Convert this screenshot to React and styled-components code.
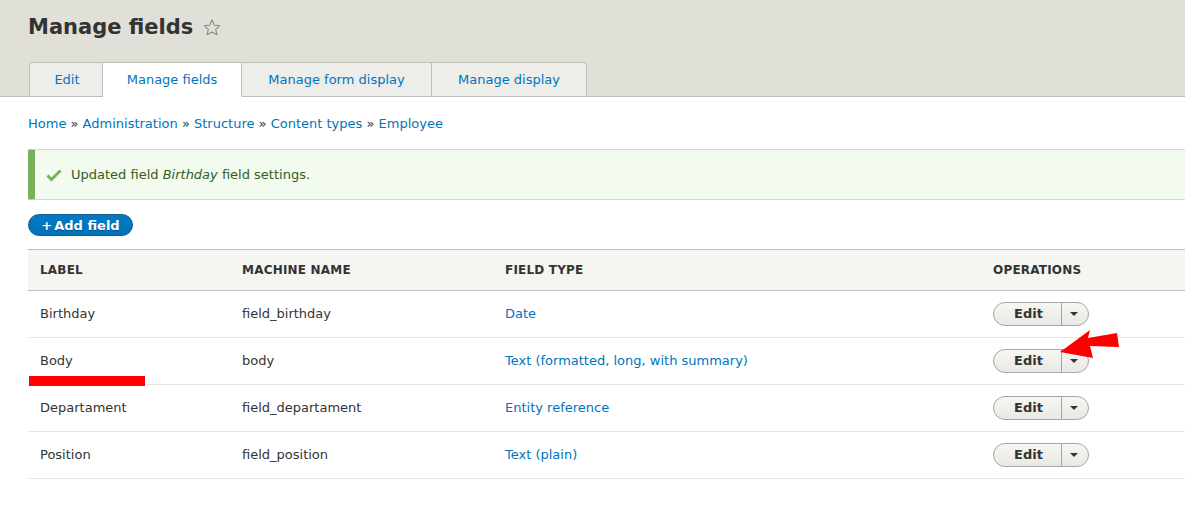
import React from "react";
import styled, { createGlobalStyle } from "styled-components";

const Global = createGlobalStyle`
  html, body { margin: 0; padding: 0; background: #fff; }
  body {
    font-family: "DejaVu Sans", Verdana, sans-serif;
    font-size: 13px;
    color: #333;
    overflow: hidden;
    width: 1185px;
    height: 519px;
  }
  a { color: #0074bd; text-decoration: none; }
`;

const Page = styled.div`
  position: relative;
  width: 1185px;
  height: 519px;
  overflow: hidden;
`;

const Header = styled.header`
  background: #e0e0d8;
  border-bottom: 1px solid #bfbfba;
  padding: 13px 0 0 28px;
  height: 83px;
  box-sizing: content-box;
  display: flex;
  flex-direction: column;
`;

const TitleRow = styled.div`
  display: flex;
  align-items: center;
  gap: 9px;
  height: 28px;
`;

const Title = styled.h1`
  margin: 0;
  font-size: 21px;
  font-weight: bold;
  color: #333;
  line-height: 28px;
`;

const Tabs = styled.nav`
  display: flex;
  margin-top: 21px;
  margin-left: 1px;
  margin-bottom: -1px;
`;

const Tab = styled.a`
  display: flex;
  align-items: center;
  justify-content: center;
  box-sizing: border-box;
  width: ${(p) => p.$w}px;
  height: 35px;
  padding-bottom: 1px;
  border: 1px solid #bfbfba;
  border-bottom: ${(p) => (p.$active ? "1px solid #fff" : "1px solid #bfbfba")};
  border-left-width: ${(p) => (p.$first ? "1px" : "0")};
  border-radius: ${(p) => (p.$first ? "4px 0 0 0" : p.$last ? "0 4px 0 0" : "0")};
  background: ${(p) => (p.$active ? "#fff" : "#ededea")};
  color: #0074bd;
  font-size: 13px;
  padding-left: ${(p) => (p.$first ? "2px" : "0")};
`;

const Content = styled.main`
  padding: 0 0 0 28px;
  display: flex;
  flex-direction: column;
`;

const Breadcrumb = styled.div`
  margin-top: 18px;
  height: 17px;
  line-height: 17px;
  color: #333;
  a { color: #0074bd; }
`;

const Message = styled.div`
  margin-top: 17px;
  height: 51px;
  box-sizing: border-box;
  width: 1200px;
  background: #f3faef;
  border: 1px solid #c9e1bd;
  border-left: 7px solid #77b259;
  border-radius: 2px 0 0 2px;
  display: flex;
  align-items: center;
  padding-left: 11px;
  gap: 9px;
  color: #325e1c;
  em { font-style: italic; }
`;

const AddButton = styled.button`
  margin-top: 14px;
  align-self: flex-start;
  height: 22px;
  width: 105px;
  padding: 0;
  border: 1px solid #1e5c90;
  border-radius: 11px;
  background: linear-gradient(to bottom, #007bc6, #0071b8);
  color: #fff;
  font-family: "DejaVu Sans", Verdana, sans-serif;
  font-weight: bold;
  font-size: 13px;
  display: flex;
  align-items: center;
  justify-content: center;
  gap: 2px;
  text-shadow: 0 1px 0 rgba(0,0,0,0.3);
`;

const Table = styled.table`
  margin-top: 13px;
  width: 1220px;
  border-collapse: collapse;
  table-layout: fixed;
`;

const Col = styled.col`
  width: ${(p) => p.$w}px;
`;

const Th = styled.th`
  text-align: left;
  background: #f5f5f2;
  border-top: 1px solid #bfbfba;
  border-bottom: 1px solid #bfbfba;
  height: 40px;
  padding: 0 12px;
  font-size: 12px;
  font-weight: bold;
  text-transform: uppercase;
  letter-spacing: 0.2px;
  color: #333;
`;

const Td = styled.td`
  height: 45px;
  padding: 0 12px 1px;
  border-bottom: 1px solid #e6e4df;
  color: #333;
  a { color: #0074bd; }
`;

const Drop = styled.div`
  display: inline-flex;
  vertical-align: middle;
  height: 24px;
  box-sizing: border-box;
  border: 1px solid #a6a6a6;
  border-radius: 12px;
  background: linear-gradient(to bottom, #f6f6f3, #e8e8e4);
  overflow: hidden;
`;

const DropMain = styled.span`
  width: 67px;
  display: flex;
  align-items: center;
  justify-content: center;
  font-weight: bold;
  font-size: 13px;
  color: #333;
  padding-left: 2px;
  box-sizing: border-box;
`;

const DropToggle = styled.span`
  width: 26px;
  border-left: 1px solid #a6a6a6;
  display: flex;
  align-items: center;
  justify-content: center;
  &::after {
    content: "";
    border-left: 4px solid transparent;
    border-right: 4px solid transparent;
    border-top: 4px solid #333;
    margin-left: -2px;
  }
`;

const Underline = styled.div`
  position: absolute;
  left: 29px;
  top: 376px;
  width: 116px;
  height: 10px;
  background: #ff0000;
`;

const Arrow = styled.svg`
  position: absolute;
  left: 1055px;
  top: 326px;
`;

const rows = [
  ["Birthday", "field_birthday", "Date"],
  ["Body", "body", "Text (formatted, long, with summary)"],
  ["Departament", "field_departament", "Entity reference"],
  ["Position", "field_position", "Text (plain)"],
];

export default function App() {
  return (
    <Page>
      <Global />
      <Header>
        <TitleRow>
          <Title>Manage fields</Title>
          <svg width="20" height="20" viewBox="0 0 24 24" style={{ marginTop: 1 }}>
            <path
              d="M12 2.5l2.8 6.1 6.6.6-5 4.4 1.5 6.5L12 16.7l-5.9 3.4 1.5-6.5-5-4.4 6.6-.6z"
              fill="none"
              stroke="#8a8a84"
              strokeWidth="1.3"
              strokeLinejoin="round"
            />
          </svg>
        </TitleRow>
        <Tabs>
          <Tab $w={74} $first>Edit</Tab>
          <Tab $w={139} $active>Manage fields</Tab>
          <Tab $w={190}>Manage form display</Tab>
          <Tab $w={155} $last>Manage display</Tab>
        </Tabs>
      </Header>
      <Content>
        <Breadcrumb>
          <a>Home</a> » <a>Administration</a> » <a>Structure</a> » <a>Content types</a> » <a>Employee</a>
        </Breadcrumb>
        <Message>
          <svg width="16" height="14" viewBox="0 0 16 14">
            <path d="M1.5 7.5l4 4 9-9" fill="none" stroke="#77b259" strokeWidth="3" />
          </svg>
          <span>
            Updated field <em>Birthday</em> field settings.
          </span>
        </Message>
        <AddButton>
          <span>+</span>
          <span>Add field</span>
        </AddButton>
        <Table>
          <colgroup>
            <Col $w={202} />
            <Col $w={263} />
            <Col $w={488} />
            <Col $w={267} />
          </colgroup>
          <thead>
            <tr>
              <Th>Label</Th>
              <Th>Machine name</Th>
              <Th>Field type</Th>
              <Th>Operations</Th>
            </tr>
          </thead>
          <tbody>
            {rows.map((r) => (
              <tr key={r[0]}>
                <Td>{r[0]}</Td>
                <Td>{r[1]}</Td>
                <Td>
                  <a>{r[2]}</a>
                </Td>
                <Td>
                  <Drop>
                    <DropMain>Edit</DropMain>
                    <DropToggle />
                  </Drop>
                </Td>
              </tr>
            ))}
          </tbody>
        </Table>
      </Content>
      <Underline />
      <Arrow width="70" height="40" viewBox="0 0 70 40">
        <polygon points="5,26 35,4 33,12 62,7 64,21 35,20 38,32" fill="#ff0000" />
      </Arrow>
    </Page>
  );
}
